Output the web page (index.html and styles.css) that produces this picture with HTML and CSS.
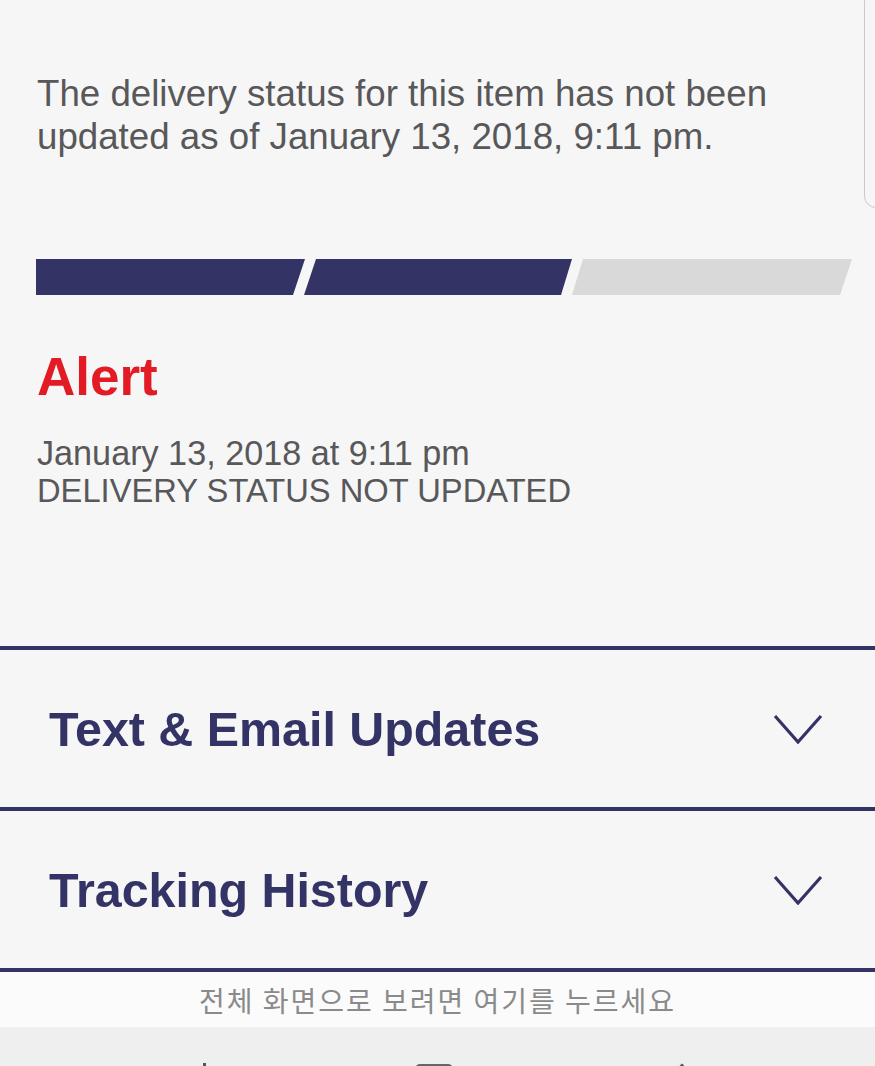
FILE: index.html
```html
<!DOCTYPE html>
<html lang="en">

<head>
  <meta charset="UTF-8">
  <meta name="viewport" content="width=device-width, initial-scale=1.0">
  <title>Tracking - Delivery Status</title>
  <link rel="stylesheet" href="styles.css">
</head>

<body>
  <div class="card-edge"></div>

  <main class="tracking">
    <p class="status-note">The delivery status for this item has not been updated as of January 13, 2018, 9:11 pm.</p>

    <!-- Progress: 2 of 3 steps -->
    <svg class="progress" width="816" height="36" viewBox="0 0 816 36">
      <polygon class="step done" points="0,0 269,0 257,36 0,36" />
      <polygon class="step done" points="280,0 536,0 525,36 268,36" />
      <polygon class="step" points="547,0 816,0 804,36 536,36" />
    </svg>

    <h2 class="alert">Alert</h2>
    <div class="alert-detail">
      <span class="alert-date">January 13, 2018 at 9:11 pm</span>
      <span class="alert-state">DELIVERY STATUS NOT UPDATED</span>
    </div>
  </main>

  <section class="accordion">
    <div class="accordion-row">
      <h3>Text &amp; Email Updates</h3>
      <svg class="chevron" width="50" height="30" viewBox="0 0 50 30">
        <polyline points="2,2 25,28 48,2" />
      </svg>
    </div>
    <div class="accordion-row">
      <h3>Tracking History</h3>
      <svg class="chevron" width="50" height="30" viewBox="0 0 50 30">
        <polyline points="2,2 25,28 48,2" />
      </svg>
    </div>
  </section>

  <div class="fullscreen-hint">전체 화면으로 보려면 여기를 누르세요</div>

  <nav class="system-nav">
    <span class="nav-recent"></span>
    <span class="nav-home"></span>
    <span class="nav-back"></span>
  </nav>
</body>

</html>
```

FILE: styles.css
```css
body {
  font-family: "Liberation Sans", Arial, sans-serif;
  margin: 0;
  background: #f6f6f6;
  height: 1066px;
  overflow: hidden;
  position: relative;
}

.card-edge {
  position: absolute;
  top: -10px;
  left: 864px;
  width: 40px;
  height: 216px;
  border: 1px solid #c9c9c9;
  border-radius: 12px;
}

.tracking {
  padding: 72px 37px 136px;
  color: #58585a;
}

.status-note {
  margin: 0;
  font-size: 36.7px;
  line-height: 43px;
}

.progress {
  display: block;
  margin: 101px 0 0 -1px;
}

.step {
  fill: #d9d9d9;
}

.step.done {
  fill: #333366;
}

.alert {
  margin: 56px 0 0;
  font-size: 53px;
  line-height: 52px;
  font-weight: bold;
  color: #e21b24;
}

.alert-detail {
  margin-top: 31px;
  line-height: 38px;
}

.alert-date,
.alert-state {
  display: block;
}

.alert-date {
  font-size: 34.2px;
}

.alert-state {
  font-size: 32.7px;
}

.accordion-row {
  display: flex;
  align-items: center;
  justify-content: space-between;
  height: 157px;
  padding: 0 52px 0 49px;
  border-top: 4px solid #333366;
}

.accordion-row:last-child {
  border-bottom: 4px solid #333366;
}

.accordion-row h3 {
  margin: 0;
  font-size: 48.4px;
  line-height: 48px;
  font-weight: bold;
  color: #333366;
}

.chevron polyline {
  fill: none;
  stroke: #333366;
  stroke-width: 3.2;
}

.fullscreen-hint {
  height: 55px;
  display: flex;
  align-items: center;
  justify-content: center;
  background: #fbfbfb;
  color: #8a8a8a;
  font-family: "Noto Sans CJK KR", sans-serif;
  font-size: 28px;
  letter-spacing: 2px;
}

.system-nav {
  display: flex;
  align-items: flex-start;
  height: 60px;
  padding-top: 36px;
  background: #efefef;
}

.nav-recent {
  width: 3px;
  height: 20px;
  margin-left: 203px;
  background: #555;
}

.nav-home {
  width: 38px;
  height: 38px;
  margin-top: 1px;
  margin-left: 209px;
  border-radius: 5px;
  background: #666;
}

.nav-back {
  width: 3px;
  height: 20px;
  margin-top: -1px;
  margin-left: 222px;
  background: #555;
  transform: rotate(40deg);
}
```
